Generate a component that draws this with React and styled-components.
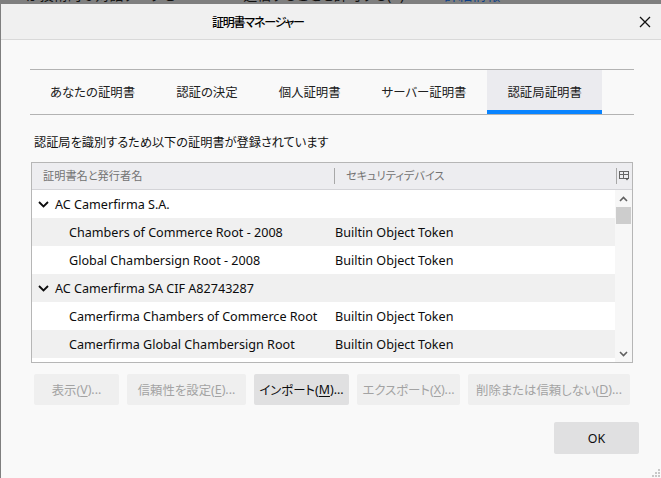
import React from "react";
import styled, { createGlobalStyle } from "styled-components";

const GlobalStyle = createGlobalStyle`
  html, body { margin: 0; padding: 0; }
  body {
    background: #7f7f7f;
    width: 661px;
    height: 478px;
    overflow: hidden;
    font-family: "Noto Sans", "Noto Sans CJK JP", sans-serif;
    font-feature-settings: "palt";
  }
`;

const Backdrop = styled.div`
  height: 4px;
  overflow: hidden;
  white-space: nowrap;
  font-size: 14px;
  line-height: 16px;
  color: #111;
`;
const BackdropLine = styled.div`
  margin-top: -13px;
  margin-left: -6px;
`;
const BackdropLink = styled.span`
  color: #0b3f8a;
  margin-left: 40px;
`;

const Dialog = styled.div`
  position: relative;
  margin-left: 1px;
  width: 660px;
  height: 474px;
  background: #f9f9f9;
  display: flex;
  flex-direction: column;
`;

const TitleBar = styled.div`
  height: 35px;
  background: #f0f0f0;
  border-bottom: 1px solid #d9d9d9;
  display: flex;
  align-items: center;
  padding-left: 211px;
  padding-right: 9px;
`;
const Title = styled.div`
  flex: 1;
  font-size: 12px;
  letter-spacing: -1.2px;
  font-weight: 500;
  color: #000;
`;
const CloseButton = styled.div`
  width: 12px;
  height: 12px;
  margin-right: 1px;
  display: flex;
`;

const Body = styled.div`
  padding: 29px 27px 0 29px;
  display: flex;
  flex-direction: column;
`;

const TabBar = styled.div`
  display: flex;
  border-top: 1px solid #b3b3b3;
  border-bottom: 1px solid #b3b3b3;
  height: 44px;
  gap: 1px;
`;
const Tab = styled.div`
  display: flex;
  align-items: center;
  padding: 4px 20px 0;
  height: 44px;
  box-sizing: border-box;
  font-size: 12.4px;
  color: #202020;
  background: ${(p) => (p.$active ? "#ebebef" : "transparent")};
  border-bottom: 4px solid ${(p) => (p.$active ? "#0a84ff" : "transparent")};
`;

const Caption = styled.div`
  margin-top: 19px;
  font-size: 12.2px;
  color: #111;
  padding-left: 4px;
  line-height: 18px;
`;

const Tree = styled.div`
  margin-top: 10px;
  margin-left: 1px;
  margin-right: 1px;
  height: 199px;
  border: 1px solid #b6b6b6;
  background: #fff;
  display: flex;
  flex-direction: column;
  overflow: hidden;
`;
const Header = styled.div`
  height: 26px;
  background: #ededf0;
  border-bottom: 1px solid #d4d4d8;
  display: grid;
  grid-template-columns: 302px 1fr 16px;
  align-items: center;
  font-size: 11.2px;
  color: #737373;
  flex-shrink: 0;
`;
const HeadCell = styled.div`
  padding-left: ${(p) => p.$pad}px;
  border-left: ${(p) => (p.$sep ? "1px solid #a8a8a8" : "none")};
  line-height: 16px;
`;
const PickerCell = styled.div`
  border-left: 1px solid #a8a8a8;
  height: 16px;
  display: flex;
  align-items: center;
  justify-content: center;
`;

const TreeBody = styled.div`
  flex: 1;
  display: flex;
  min-height: 0;
`;
const Rows = styled.div`
  flex: 1;
  display: flex;
  flex-direction: column;
`;
const Row = styled.div`
  height: 28px;
  flex-shrink: 0;
  display: grid;
  grid-template-columns: 303px 1fr;
  align-items: center;
  background: ${(p) => (p.$odd ? "#f0f0f0" : "#fff")};
  font-size: 12.6px;
  color: #0c0c0d;
`;
const NameCell = styled.div`
  display: flex;
  align-items: center;
  padding-left: ${(p) => (p.$parent ? 6 : 37)}px;
  gap: 6px;
  white-space: nowrap;
`;
const DeviceCell = styled.div`
  white-space: nowrap;
`;

const Scrollbar = styled.div`
  width: 17px;
  background: #f7f7f7;
  display: flex;
  flex-direction: column;
  align-items: center;
`;
const ScrollArrow = styled.div`
  height: 17px;
  width: 100%;
  display: flex;
  align-items: center;
  justify-content: center;
`;
const ScrollTrack = styled.div`
  flex: 1;
  width: 100%;
  display: flex;
  flex-direction: column;
  align-items: center;
`;
const Thumb = styled.div`
  width: 15px;
  height: 17px;
  background: #cdcdcd;
`;

const ButtonRow = styled.div`
  margin-top: 11px;
  margin-left: 4px;
  display: flex;
  gap: 8px;
`;
const Button = styled.div`
  height: ${(p) => p.$h || 31}px;
  padding: 0 8px;
  width: ${(p) => p.$w}px;
  box-sizing: border-box;
  border-radius: 2px;
  display: flex;
  align-items: center;
  justify-content: center;
  font-size: 12.4px;
  white-space: nowrap;
  background: ${(p) => (p.$disabled ? "#efefef" : "#e0e0e1")};
  color: ${(p) => (p.$disabled ? "#a3a3a3" : "#0c0c0d")};
`;
const Key = styled.span`
  text-decoration: underline;
  text-underline-offset: 2px;
`;
const OkRow = styled.div`
  margin-top: 17px;
  display: flex;
  justify-content: flex-end;
  margin-right: -5px;
`;

const Grip = styled.div`
  position: absolute;
  right: 1px;
  bottom: 1px;
  width: 8px;
  height: 8px;
  display: flex;
`;

const Chevron = () => (
  <svg width="11" height="7" viewBox="0 0 11 7">
    <path d="M1 1 L5.5 5.5 L10 1" fill="none" stroke="#0c0c0d" strokeWidth="1.8" />
  </svg>
);

const rows = [
  { parent: true, name: "AC Camerfirma S.A.", device: "" },
  { name: "Chambers of Commerce Root - 2008", device: "Builtin Object Token" },
  { name: "Global Chambersign Root - 2008", device: "Builtin Object Token" },
  { parent: true, name: "AC Camerfirma SA CIF A82743287", device: "" },
  { name: "Camerfirma Chambers of Commerce Root", device: "Builtin Object Token" },
  { name: "Camerfirma Global Chambersign Root", device: "Builtin Object Token" },
  { name: "", device: "" },
];

const tabs = ["あなたの証明書", "認証の決定", "個人証明書", "サーバー証明書", "認証局証明書"];

export default function App() {
  return (
    <>
      <GlobalStyle />
      <Backdrop>
        <BackdropLine>
          efox が技術的な対話データを Mozilla へ送信することを許可する(R)
          <BackdropLink>詳細情報</BackdropLink>
        </BackdropLine>
      </Backdrop>
      <Dialog>
        <TitleBar>
          <Title>証明書マネージャー</Title>
          <CloseButton>
            <svg width="12" height="12" viewBox="0 0 12 12">
              <path d="M1 1 L11 11 M11 1 L1 11" stroke="#111" strokeWidth="1.3" />
            </svg>
          </CloseButton>
        </TitleBar>
        <Body>
          <TabBar>
            {tabs.map((t, i) => (
              <Tab key={t} $active={i === 4}>
                {t}
              </Tab>
            ))}
          </TabBar>
          <Caption>認証局を識別するため以下の証明書が登録されています</Caption>
          <Tree>
            <Header>
              <HeadCell $pad={11}>証明書名と発行者名</HeadCell>
              <HeadCell $pad={11} $sep>
                セキュリティデバイス
              </HeadCell>
              <PickerCell>
                <svg width="11" height="10" viewBox="0 0 11 10">
                  <rect x="0.5" y="0.5" width="9" height="7" fill="none" stroke="#666" />
                  <path d="M0.5 3.5 H9.5 M4.5 0.5 V7.5" stroke="#666" />
                  <path d="M6 7 H10 L8 9.5 Z" fill="#555" />
                </svg>
              </PickerCell>
            </Header>
            <TreeBody>
              <Rows>
                {rows.map((r, i) => (
                  <Row key={i} $odd={i % 2 === 1}>
                    <NameCell $parent={r.parent}>
                      {r.parent && <Chevron />}
                      {r.name}
                    </NameCell>
                    <DeviceCell>{r.device}</DeviceCell>
                  </Row>
                ))}
              </Rows>
              <Scrollbar>
                <ScrollArrow>
                  <svg width="9" height="6" viewBox="0 0 9 6">
                    <path d="M1 5 L4.5 1.5 L8 5" fill="none" stroke="#606060" strokeWidth="1.6" />
                  </svg>
                </ScrollArrow>
                <ScrollTrack>
                  <Thumb />
                </ScrollTrack>
                <ScrollArrow>
                  <svg width="9" height="6" viewBox="0 0 9 6">
                    <path d="M1 1 L4.5 4.5 L8 1" fill="none" stroke="#606060" strokeWidth="1.6" />
                  </svg>
                </ScrollArrow>
              </Scrollbar>
            </TreeBody>
          </Tree>
          <ButtonRow>
            <Button $disabled $w={85}>
              表示(<Key>V</Key>)...
            </Button>
            <Button $disabled $w={119}>
              信頼性を設定(<Key>E</Key>)...
            </Button>
            <Button $w={95}>
              インポート(<Key>M</Key>)...
            </Button>
            <Button $disabled $w={103}>
              エクスポート(<Key>X</Key>)...
            </Button>
            <Button $disabled $w={162}>
              削除または信頼しない(<Key>D</Key>)...
            </Button>
          </ButtonRow>
          <OkRow>
            <Button $w={85} $h={32}>
              OK
            </Button>
          </OkRow>
        </Body>
        <Grip>
          <svg width="8" height="8" viewBox="0 0 8 8">
            {[[6, 0], [6, 3], [3, 3], [6, 6], [3, 6], [0, 6]].map(([x, y], i) => (
              <rect key={i} x={x} y={y} width="2" height="2" fill="#c8c8c8" />
            ))}
          </svg>
        </Grip>
      </Dialog>
    </>
  );
}
